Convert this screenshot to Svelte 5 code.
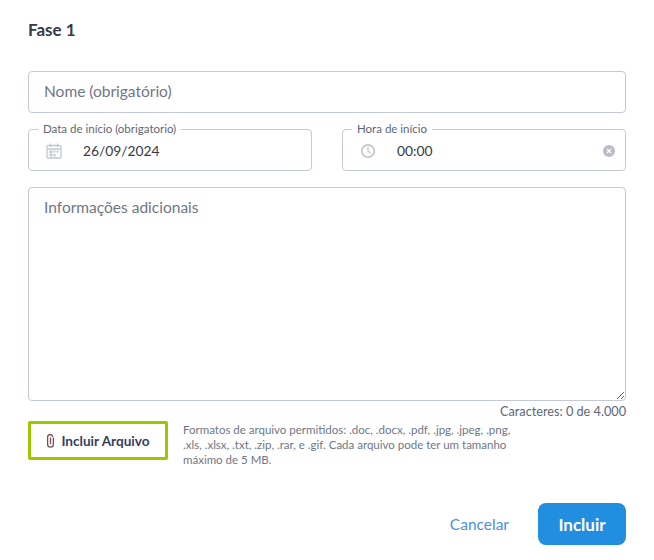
<script>
	let nome = $state('');
	let info = $state('');
</script>

<div class="modal">
	<h2>Fase 1</h2>

	<input class="field nome" type="text" placeholder="Nome (obrigatório)" bind:value={nome} />

	<div class="row">
		<fieldset class="box">
			<legend>Data de início (obrigatorio)</legend>
			<svg class="ico" width="16" height="16" viewBox="0 0 16 16" fill="none" stroke="#c3c7d0" stroke-width="1.3">
				<rect x="1" y="2.5" width="14" height="12.5" rx="1" />
				<path d="M1 6h14M4.5 0.5v3.5M11.5 0.5v3.5" />
				<path d="M3.5 7.5h3v3h-3zM7.5 7.5h2v2h-2zM10.5 7.5h2v2h-2zM3.5 11h3v2.5h-3zM7.5 11h2v2.5h-2z" fill="#c3c7d0" stroke="none" />
			</svg>
			<span class="val">26/09/2024</span>
		</fieldset>
		<fieldset class="box">
			<legend>Hora de início</legend>
			<svg class="ico" width="16" height="16" viewBox="0 0 16 16" fill="none" stroke="#c3c7d0" stroke-width="1.7">
				<circle cx="8" cy="8" r="6.2" />
				<path d="M8 4v4.2l2.6 1.8" stroke-width="1.3" />
			</svg>
			<span class="val">00:00</span>
			<svg class="clear" width="12" height="12" viewBox="0 0 12 12">
				<circle cx="6" cy="6" r="6" fill="#b9bdc7" />
				<path d="M4 4l4 4M8 4l-4 4" stroke="#fff" stroke-width="1.2" />
			</svg>
		</fieldset>
	</div>

	<textarea class="field info" placeholder="Informações adicionais" bind:value={info}></textarea>
	<div class="count">Caracteres: {info.length} de 4.000</div>

	<div class="attach">
		<button class="file">
			<svg width="9" height="14" viewBox="0 0 9 14" fill="none" stroke="#7a4a55" stroke-width="1.3">
				<path d="M7.4 3.5v6.7a2.9 2.9 0 0 1-5.8 0V3a2.5 2.5 0 0 1 5 0" />
				<path d="M4.5 3.5v6.5" />
			</svg>
			Incluir Arquivo
		</button>
		<p>Formatos de arquivo permitidos: .doc, .docx, .pdf, .jpg, .jpeg, .png, .xls, .xlsx, .txt, .zip, .rar, e .gif. Cada arquivo pode ter um tamanho máximo de 5 MB.</p>
	</div>

	<div class="actions">
		<button class="cancel">Cancelar</button>
		<button class="submit">Incluir</button>
	</div>
</div>

<style>
	:global(body) {
		background: #fff;
		font-family: Lato, "Noto Sans", sans-serif;
	}

	.modal {
		padding: 20px 28px 0;
		width: 598px;
	}

	h2 {
		margin: 0 0 32px;
		font-size: 17px;
		line-height: 19px;
		font-weight: 700;
		color: #343a46;
	}

	.field {
		display: block;
		box-sizing: border-box;
		width: 100%;
		border: 1px solid #c3c9d6;
		border-radius: 4px;
		padding: 0 15px;
		font: 15.5px Lato, sans-serif;
		color: #343a46;
		outline: none;
	}

	.field::placeholder {
		color: #6f7687;
		opacity: 1;
	}

	.nome {
		height: 42px;
		padding-bottom: 3px;
	}

	.row {
		display: grid;
		grid-template-columns: 284px 284px;
		gap: 30px;
		margin-top: 9px;
	}

	.box {
		display: flex;
		align-items: center;
		box-sizing: border-box;
		height: 49px;
		margin: 0;
		padding: 0 10px 5px 17px;
		border: 1px solid #c3c9d6;
		border-radius: 4px;
		min-width: 0;
	}

	legend {
		margin-left: -8px;
		padding: 0 5px;
		font-size: 11.5px;
		line-height: 14px;
		color: #5f6678;
	}

	.ico {
		flex: none;
		margin-right: 21px;
	}

	.val {
		font-size: 13.8px;
		color: #343a46;
	}

	.clear {
		margin-left: auto;
	}

	.info {
		height: 214px;
		margin-top: 16px;
		padding-top: 10px;
		resize: vertical;
	}

	.count {
		margin-top: 3px;
		text-align: right;
		font-size: 12.7px;
		line-height: 15px;
		color: #5f6678;
	}

	.attach {
		display: flex;
		gap: 15px;
		margin-top: 2px;
	}

	.file {
		flex: none;
		display: flex;
		align-items: center;
		justify-content: center;
		gap: 6px;
		box-sizing: border-box;
		width: 140px;
		height: 39px;
		background: #fff;
		border: 3px solid #9bc800;
		border-radius: 2px;
		font: 700 13.6px Lato, sans-serif;
		color: #343f5c;
	}

	.attach p {
		margin: 1px 0 0;
		width: 340px;
		font-size: 11.5px;
		line-height: 15px;
		color: #6f7687;
	}

	.actions {
		display: flex;
		justify-content: flex-end;
		align-items: center;
		gap: 29px;
		margin-top: 36px;
	}

	.cancel {
		background: none;
		border: none;
		padding: 0;
		font: 15.5px Lato, sans-serif;
		color: #4a90e2;
	}

	.submit {
		width: 88px;
		height: 42px;
		background: #228ee0;
		border: none;
		border-radius: 8px;
		font: 700 17px Lato, sans-serif;
		color: #fff;
	}
</style>
